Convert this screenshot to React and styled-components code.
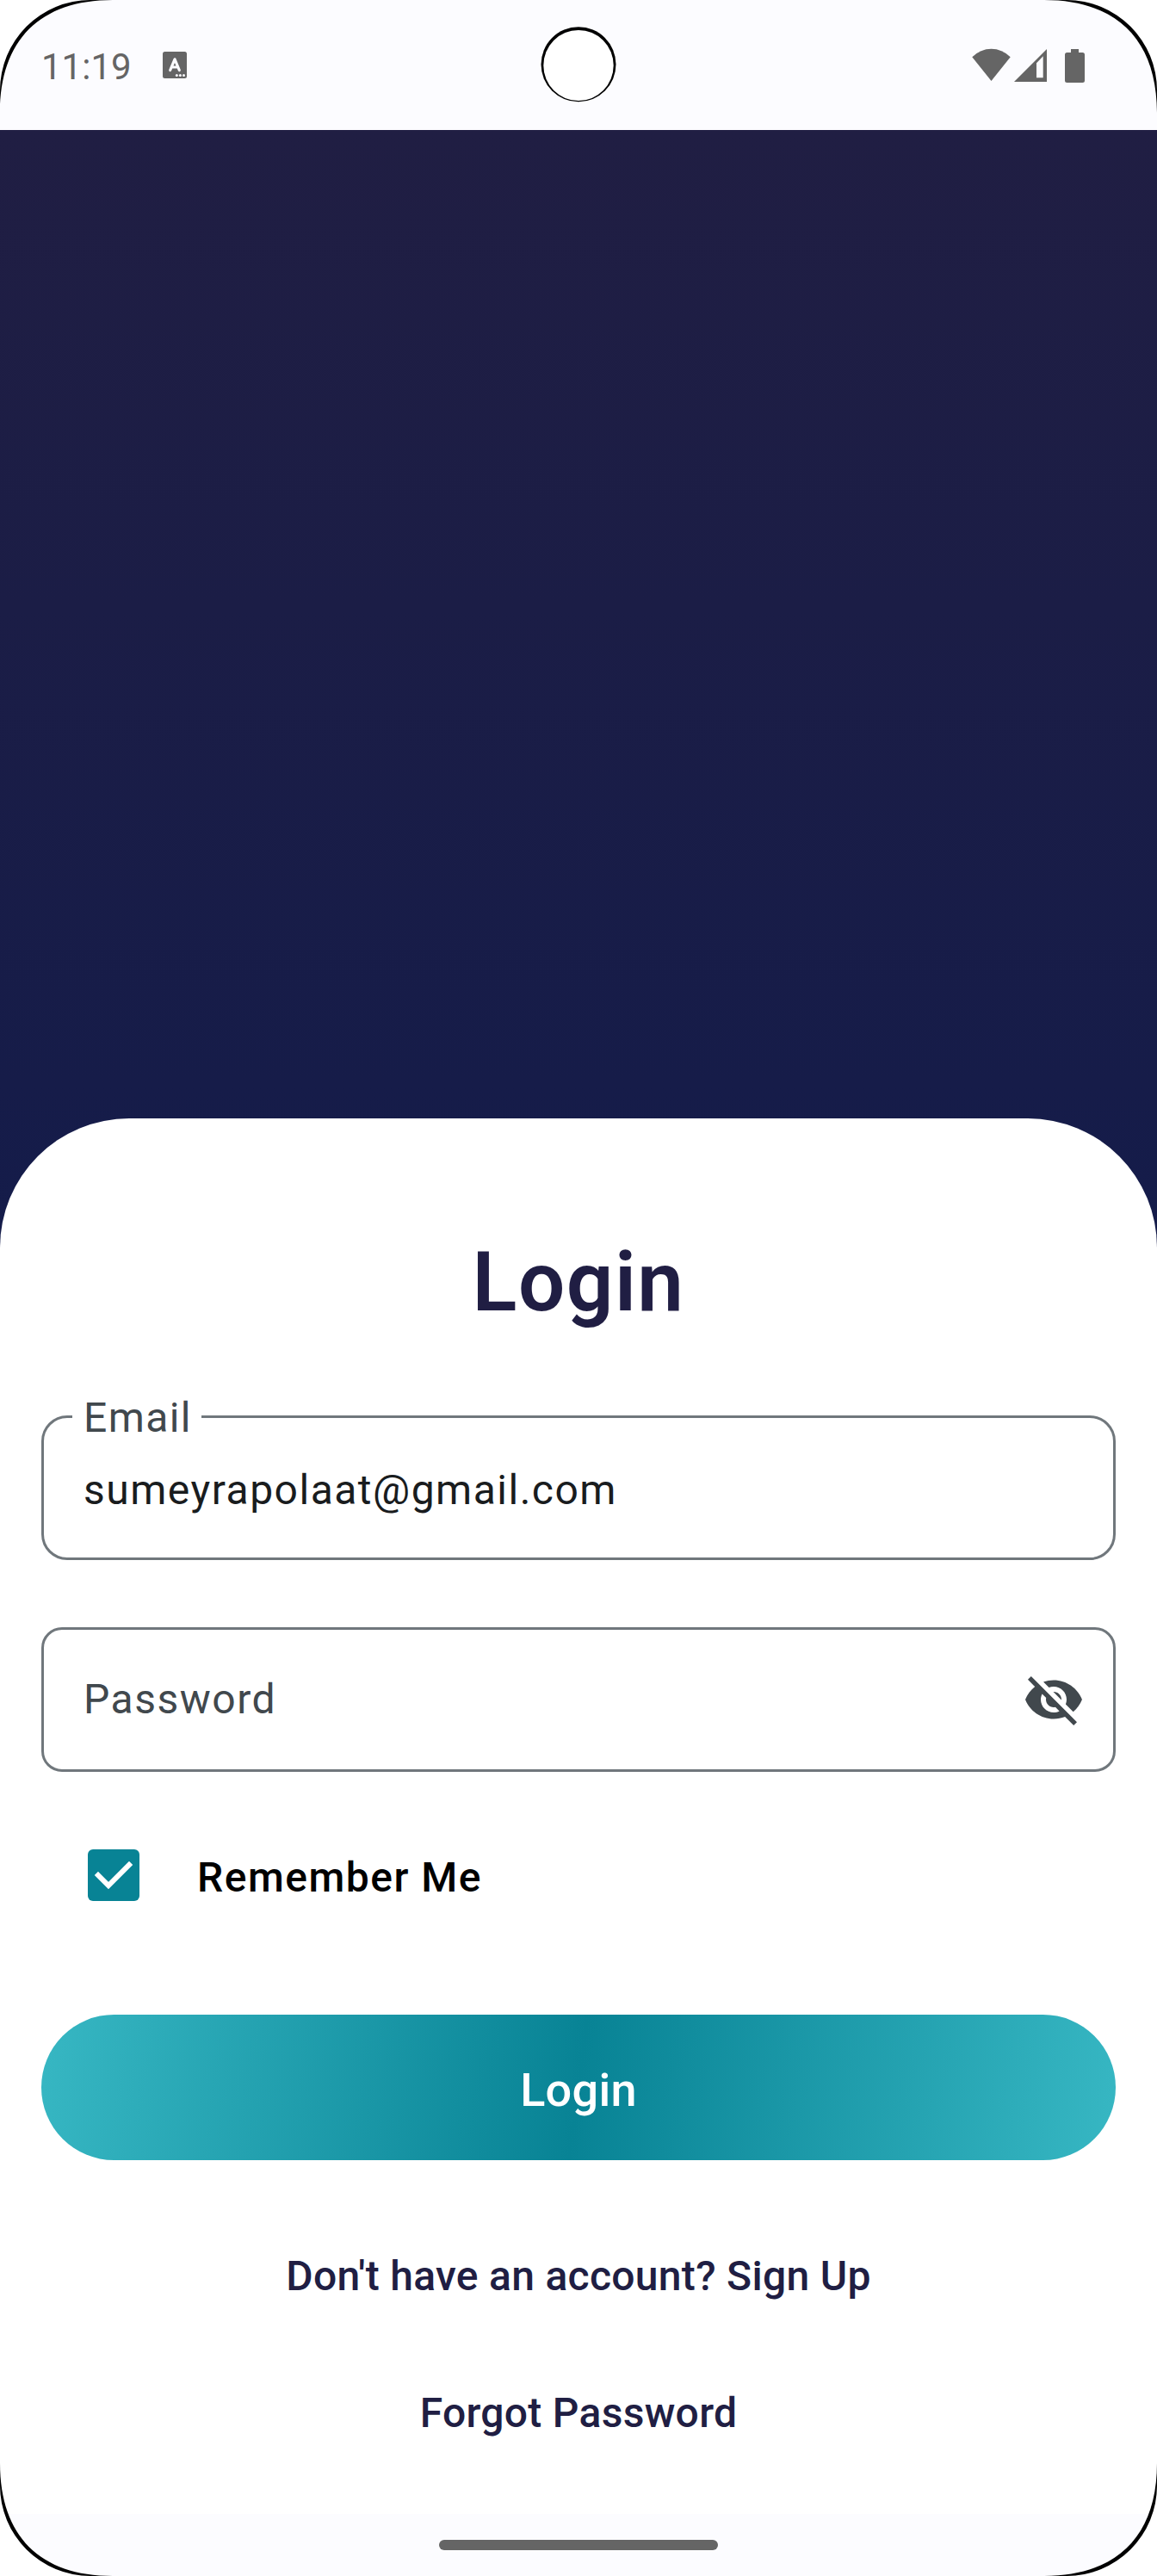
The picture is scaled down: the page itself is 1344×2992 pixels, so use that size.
import React from "react";
import styled, { createGlobalStyle } from "styled-components";

const GlobalStyle = createGlobalStyle`
  *, *::before, *::after { box-sizing: border-box; }
  body {
    margin: 0;
    background: #ffffff;
    font-family: Roboto, "Liberation Sans", sans-serif;
  }
`;

const Screen = styled.div`
  position: relative;
  display: flex;
  flex-direction: column;
  width: 1344px;
  height: 2992px;
  overflow: hidden;
  background: #fcfcff;
`;

const StatusBar = styled.header`
  display: flex;
  align-items: center;
  justify-content: space-between;
  flex: none;
  height: 151px;
  padding: 0 84px 0 48px;
  color: #656565;
`;

const StatusGroup = styled.div`
  display: flex;
  align-items: center;
`;

const Clock = styled.span`
  width: 141px;
  padding-top: 4px;
  font-size: 42px;
  line-height: 50px;
`;

const Glyph = styled.svg`
  display: block;
  flex: none;
  margin-left: ${(p) => p.$gap || 0}px;
`;

const Camera = styled.svg`
  position: absolute;
  top: 30px;
  left: 627px;
`;

const Backdrop = styled.main`
  display: flex;
  flex: 1;
  padding-top: 1148px;
  background: linear-gradient(180deg, #201e43 0%, #071952 100%);
`;

const Card = styled.form`
  display: flex;
  flex-direction: column;
  flex: 1;
  margin: 0;
  padding: 134px 48px 0;
  border-radius: 150px 150px 0 0;
  background: #ffffff;
`;

const Title = styled.h1`
  margin: 0 0 99px;
  color: #201e43;
  font-size: 96px;
  font-weight: 600;
  line-height: 112px;
  letter-spacing: 1.5px;
  text-align: center;
`;

const Field = styled.div`
  position: relative;
  display: flex;
  align-items: center;
  justify-content: space-between;
  height: 168px;
  margin-bottom: ${(p) => p.$after}px;
  padding: ${(p) => p.$drop}px 33px 0 46px;
  border: 3px solid #70777c;
  border-radius: ${(p) => p.$radius}px;
`;

const FieldText = styled.span`
  color: ${(p) => (p.$placeholder ? "#41484d" : "#191c1e")};
  font-size: 48px;
  line-height: 72px;
  letter-spacing: 1.5px;
`;

const FloatingLabel = styled.span`
  position: absolute;
  top: -28px;
  left: 33px;
  padding: 0 11px 0 13px;
  background: #ffffff;
  color: #41484d;
  font-size: 48px;
  line-height: 56px;
  letter-spacing: 1.4px;
`;

const RememberRow = styled.div`
  display: flex;
  align-items: center;
  height: 144px;
  padding-left: 54px;
  gap: 67px;
`;

const RememberText = styled.span`
  padding-top: 5px;
  color: #000000;
  font-size: 48px;
  font-weight: 500;
  line-height: 72px;
  letter-spacing: 1.5px;
`;

const Checkbox = styled.span`
  display: flex;
  width: 60px;
  height: 60px;
  border-radius: 6px;
  background: #088395;
`;

const LoginButton = styled.button`
  display: flex;
  align-items: center;
  justify-content: center;
  height: 169px;
  margin: 90px 0 0;
  padding: 6px 0 0;
  border: 0;
  border-radius: 84.5px;
  background: linear-gradient(97.7deg, #37b7c3 0%, #088395 50%, #37b7c3 100%);
  color: #ffffff;
  font-family: inherit;
  font-size: 54px;
  font-weight: 500;
  line-height: 72px;
  letter-spacing: 0.3px;
`;

const TextLink = styled.a`
  display: block;
  margin-top: ${(p) => p.$before}px;
  color: #201e43;
  font-size: 48px;
  font-weight: 500;
  line-height: 56px;
  letter-spacing: 0.3px;
  text-align: center;
`;

const NavBar = styled.footer`
  display: flex;
  justify-content: center;
  flex: none;
  height: 72px;
  padding-top: 30px;
`;

const Handle = styled.span`
  width: 324px;
  height: 12px;
  border-radius: 6px;
  background: #656565;
`;

const CornerSvg = styled.svg`
  position: absolute;
  ${(p) => p.$v}: 0;
  ${(p) => p.$h}: 0;
  transform: scale(${(p) => (p.$h === "right" ? -1 : 1)}, ${(p) => (p.$v === "bottom" ? -1 : 1)});
`;

function Corner({ v, h }) {
  return (
    <CornerSvg $v={v} $h={h} width="134" height="134" viewBox="0 0 134 134">
      <path d="M0 0H131C46.5 0 0 46.5 0 131Z" fill="#000000" />
      <path d="M0 0H105A105 105 0 0 0 0 105Z" fill="#ffffff" />
    </CornerSvg>
  );
}

function KeyboardIcon() {
  return (
    <Glyph width="28" height="31" viewBox="0 0 28 31">
      <rect width="28" height="31" rx="2.5" fill="#656565" />
      <path d="M8.7 21.5L14 8.8L19.3 21.5M10.6 18H17.4" fill="none" stroke="#fcfcff" strokeWidth="3.2" strokeLinecap="round" strokeLinejoin="round" />
      <circle cx="16.3" cy="27.5" r="1.5" fill="#fcfcff" />
      <circle cx="20.4" cy="27.5" r="1.5" fill="#fcfcff" />
      <circle cx="24.5" cy="27.5" r="1.5" fill="#fcfcff" />
    </Glyph>
  );
}

function WifiIcon() {
  return (
    <Glyph width="45" height="40" viewBox="0 0 45 40">
      <path d="M0.3 10.2Q10 0.7 22.5 0.7T44.7 10.2L22.5 38Z" fill="currentColor" />
    </Glyph>
  );
}

function SignalIcon() {
  return (
    <Glyph $gap={4} width="38" height="40" viewBox="0 0 38 40">
      <path fillRule="evenodd" d="M38 1V39H0ZM26 17.3V34.2H33.7V9.3Z" fill="currentColor" />
    </Glyph>
  );
}

function BatteryIcon() {
  return (
    <Glyph $gap={21} width="23" height="40" viewBox="0 0 23 40">
      <path d="M7 1H16V5H20.5Q23 5 23 7.5V37.5Q23 40 20.5 40H2.5Q0 40 0 37.5V7.5Q0 5 2.5 5H7Z" fill="currentColor" />
    </Glyph>
  );
}

function VisibilityOffIcon() {
  return (
    <Glyph width="72" height="72" viewBox="0 0 24 24" fill="#41484d">
      <path d="M12 7c2.76 0 5 2.24 5 5 0 .65-.13 1.26-.36 1.83l2.92 2.92c1.51-1.26 2.7-2.89 3.43-4.75-1.73-4.39-6-7.5-11-7.5-1.4 0-2.74.25-3.98.7l2.16 2.16C10.74 7.13 11.35 7 12 7zM2 4.27l2.28 2.28.46.46C3.08 8.3 1.78 10.02 1 12c1.73 4.39 6 7.5 11 7.5 1.55 0 3.03-.3 4.38-.84l.42.42L19.73 22 21 20.73 3.27 3 2 4.27zM7.53 9.8l1.55 1.55c-.05.21-.08.43-.08.65 0 1.66 1.34 3 3 3 .22 0 .44-.03.65-.08l1.55 1.55c-.67.33-1.41.53-2.2.53-2.76 0-5-2.24-5-5 0-.79.2-1.53.53-2.2zm4.31-.78l3.15 3.15.02-.16c0-1.66-1.34-3-3-3l-.17.01z" />
    </Glyph>
  );
}

export default function App() {
  return (
    <>
      <GlobalStyle />
      <Screen>
        <StatusBar>
          <StatusGroup>
            <Clock>11:19</Clock>
            <KeyboardIcon />
          </StatusGroup>
          <StatusGroup>
            <WifiIcon />
            <SignalIcon />
            <BatteryIcon />
          </StatusGroup>
        </StatusBar>
        <Backdrop>
          <Card>
            <Title>Login</Title>
            <Field $radius={30} $after={78} $drop={5}>
              <FloatingLabel>Email</FloatingLabel>
              <FieldText>sumeyrapolaat@gmail.com</FieldText>
            </Field>
            <Field $radius={24} $after={48} $drop={0}>
              <FieldText $placeholder>Password</FieldText>
              <VisibilityOffIcon />
            </Field>
            <RememberRow>
              <Checkbox role="checkbox" aria-checked="true">
                <svg width="60" height="60" viewBox="0 0 60 60">
                  <path d="M12 30L24 42L48 18" fill="none" stroke="#ffffff" strokeWidth="6" strokeLinecap="square" />
                </svg>
              </Checkbox>
              <RememberText>Remember Me</RememberText>
            </RememberRow>
            <LoginButton type="button">Login</LoginButton>
            <TextLink $before={107}>Don't have an account? Sign Up</TextLink>
            <TextLink $before={103}>Forgot Password</TextLink>
          </Card>
        </Backdrop>
        <NavBar>
          <Handle />
        </NavBar>
        <Camera width="90" height="90" viewBox="0 0 90 90">
          <circle cx="45" cy="44.8" r="43.5" fill="#000000" />
          <ellipse cx="45" cy="46" rx="40.7" ry="41" fill="#ffffff" />
        </Camera>
        <Corner v="top" h="left" />
        <Corner v="top" h="right" />
        <Corner v="bottom" h="left" />
        <Corner v="bottom" h="right" />
      </Screen>
    </>
  );
}
